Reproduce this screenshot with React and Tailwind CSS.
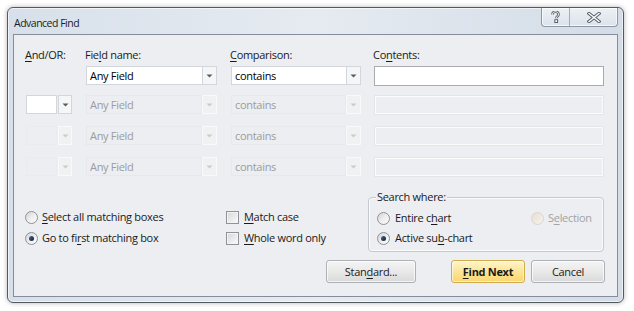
import React from "react";

const FONT = "font-['Open_Sans',sans-serif]";

function Arrow({ disabled }) {
  return (
    <svg width="7" height="4" viewBox="0 0 7 4">
      <path d="M0.5 0.5h6l-3 3z" fill={disabled ? "#c9cbce" : "#5b5b5b"} />
    </svg>
  );
}

function Combo({ text, enabled, w }) {
  if (enabled) {
    return (
      <div className={`flex h-[19px] ${w} border border-[#d3d6da] bg-white`}>
        <div className="flex flex-1 items-center pl-[3px] text-[#000]">{text}</div>
        <div className="flex w-[14px] items-center justify-center border-l border-[#d3d6da] bg-[#f5f6f7]">
          <Arrow />
        </div>
      </div>
    );
  }
  return (
    <div className={`flex h-[19px] ${w}`}>
      <div className="flex flex-1 items-center border border-[#e6e8eb] pl-[3px] text-[#9c9c9c]">{text}</div>
      <div className="flex w-[15px] items-center justify-center border border-[#f8f9fa] bg-[#eff1f3]">
        <Arrow disabled />
      </div>
    </div>
  );
}

function AndOr({ enabled }) {
  return (
    <div className="flex h-[19px] w-[46px] gap-[1px]">
      <div className={`flex-1 border ${enabled ? "border-[#d3d6da] bg-white" : "border-[#e9ebee]"}`} />
      <div
        className={`flex w-[14px] items-center justify-center border ${
          enabled ? "border-[#d3d6da] bg-[#f5f6f7]" : "border-[#f8f9fa] bg-[#eff1f3]"
        }`}
      >
        <Arrow disabled={!enabled} />
      </div>
    </div>
  );
}

function Contents({ enabled }) {
  return enabled ? (
    <div className="h-[20px] w-[230px] border border-[#a9abae] bg-white" />
  ) : (
    <div className="h-[20px] w-[230px] border border-[#e3e5e8] shadow-[inset_0_0_0_1px_#fbfbfc]" />
  );
}

function Radio({ checked, disabled }) {
  return (
    <div
      className={`flex h-[13px] w-[13px] shrink-0 items-center justify-center rounded-full border ${
        disabled
          ? "border-[#dcd6cc] bg-linear-to-br from-[#e6dfd3] to-[#f6f2ec]"
          : "border-[#8f9296] bg-linear-to-br from-[#d6d3cf] via-[#eeeeee] to-[#fbfbfb]"
      }`}
    >
      {checked && <div className="h-[5px] w-[5px] rounded-full bg-linear-to-br from-[#4b6a96] to-[#0f1e38]" />}
    </div>
  );
}

function Check() {
  return (
    <div className="flex h-[13px] w-[13px] shrink-0 items-center justify-center border border-[#8f9296] bg-[#f4f4f4]">
      <div className="h-[9px] w-[9px] bg-linear-to-br from-[#d9dadc] to-[#f8f8f8]" />
    </div>
  );
}

function U({ children }) {
  return <span className="underline decoration-[1px] underline-offset-[2px]">{children}</span>;
}

export default function App() {
  const rowGaps = ["mt-[4px]", "mt-[9px]", "mt-[11px]", "mt-[11px]"];
  return (
    <div className={`flex h-[311px] w-[634px] bg-white pl-[7px] pt-[7px] ${FONT} text-[11px] leading-[14px] tracking-[-0.3px] text-[#1a1a1a]`}>
      <div className="flex h-[296px] w-[617px] flex-col rounded-[6px] border border-[#54595f] bg-linear-to-r from-[#d7e0ea] via-[#e6ebf1] to-[#d3dce7] px-[5px] pb-[5px] shadow-[0_0_5px_rgba(0,0,0,0.3),inset_0_0_0_1px_rgba(255,255,255,0.6)]">
        <div className="flex h-[26px] items-start justify-between">
          <div className="pl-[1px] pt-[8px] text-[10.5px] leading-[14px] tracking-[-0.5px] text-[#1b1b1b]">Advanced Find</div>
          <div className="flex h-[19px] overflow-hidden rounded-b-[4px] border border-t-0 border-[#8d97a3] bg-linear-to-b from-[#edf1f5] to-[#dce3eb] shadow-[inset_0_0_0_1px_rgba(255,255,255,0.7)]">
            <div className="flex w-[28px] items-center justify-center border-r border-[#a3adb9]">
              <svg width="9" height="12" viewBox="0 0 9 12">
                <path
                  d="M1.5 3.5 C1.5 1.2 3 0.8 4.5 0.8 C6.2 0.8 7.5 1.8 7.5 3.4 C7.5 5.2 5.2 5.5 5.2 7.3"
                  fill="none"
                  stroke="#59606a"
                  strokeWidth="2.6"
                />
                <path
                  d="M1.5 3.5 C1.5 1.2 3 0.8 4.5 0.8 C6.2 0.8 7.5 1.8 7.5 3.4 C7.5 5.2 5.2 5.5 5.2 7.3"
                  fill="none"
                  stroke="#ffffff"
                  strokeWidth="1"
                />
                <rect x="3.8" y="8.7" width="2.8" height="2.8" fill="#ffffff" stroke="#59606a" strokeWidth="1" />
              </svg>
            </div>
            <div className="flex w-[47px] items-center justify-center">
              <svg width="14" height="11" viewBox="0 0 14 11">
                <path d="M2 1.5 L12 9.5 M12 1.5 L2 9.5" stroke="#59606a" strokeWidth="3.4" strokeLinecap="square" />
                <path d="M2 1.5 L12 9.5 M12 1.5 L2 9.5" stroke="#ffffff" strokeWidth="1.4" strokeLinecap="square" />
              </svg>
            </div>
          </div>
        </div>

        <div className="flex flex-1 flex-col border border-[#848d99] bg-[#eceef1] pl-[11px] pr-[12px]">
          <div className="mt-[13px] flex">
            <div className="w-[60px]"><U>A</U>nd/OR:</div>
            <div className="w-[145px]">Fie<U>l</U>d name:</div>
            <div className="w-[143px]"><U>C</U>omparison:</div>
            <div>Co<U>n</U>tents:</div>
          </div>

          {[0, 1, 2, 3].map((i) => (
            <div key={i} className={`${rowGaps[i]} flex items-start`}>
              <div className="w-[60px] pl-[1px]">{i === 0 ? null : <AndOr enabled={i === 1} />}</div>
              <div className="w-[145px] pl-[1px]">
                <Combo text="Any Field" enabled={i === 0} w="w-[131px]" />
              </div>
              <div className="w-[143px] pl-[1px]">
                <Combo text="contains" enabled={i === 0} w="w-[130px]" />
              </div>
              <div className="pl-[1px]">
                <Contents enabled={i === 0} />
              </div>
            </div>
          ))}

          <div className="mt-[20px] flex">
            <div className="flex w-[201px] flex-col gap-[5px] pt-[12px]">
              <div className="flex h-[16px] items-center gap-[4px]">
                <Radio />
                <span><U>S</U>elect all matching boxes</span>
              </div>
              <div className="flex h-[16px] items-center gap-[4px]">
                <Radio checked />
                <span>Go to fi<U>r</U>st matching box</span>
              </div>
            </div>
            <div className="flex w-[142px] flex-col gap-[5px] pt-[12px]">
              <div className="flex h-[16px] items-center gap-[5px]">
                <Check />
                <span><U>M</U>atch case</span>
              </div>
              <div className="flex h-[16px] items-center gap-[5px]">
                <Check />
                <span><U>W</U>hole word only</span>
              </div>
            </div>
            <div className="relative h-[55px] w-[236px] rounded-[4px] border border-[#c5c9cf] shadow-[inset_0_0_0_1px_#fafbfc]">
              <div className="absolute left-[7px] top-[-8px] bg-[#eceef1] px-[1px]">Search where:</div>
              <div className="flex flex-col gap-[4px] pl-[8px] pt-[12px]">
                <div className="flex h-[16px] items-center">
                  <div className="flex w-[154px] items-center gap-[5px]">
                    <Radio />
                    <span>Entire c<U>h</U>art</span>
                  </div>
                  <div className="flex items-center gap-[4px] text-[#a3a3a3]">
                    <Radio disabled />
                    <span>S<U>e</U>lection</span>
                  </div>
                </div>
                <div className="flex h-[16px] items-center gap-[5px]">
                  <Radio checked />
                  <span>Active su<U>b</U>-chart</span>
                </div>
              </div>
            </div>
          </div>

          <div className="mt-[8px] flex justify-end">
            <div className="flex h-[23px] w-[90px] items-center justify-center rounded-[3px] border border-[#adb0b4] bg-linear-to-b from-[#f4f4f4] via-[#e9e9e9] to-[#d9d9d9] shadow-[inset_0_0_0_1px_rgba(255,255,255,0.7)]">
              Stan<U>d</U>ard...
            </div>
            <div className="ml-[35px] flex h-[23px] w-[74px] items-center justify-center rounded-[3px] border border-[#d3ab4f] bg-linear-to-b from-[#fff5cd] via-[#fde596] to-[#f9d66f] font-bold text-[#1a1a1a] shadow-[inset_0_0_0_1px_rgba(255,255,255,0.6)]">
              <U>F</U>ind Next
            </div>
            <div className="ml-[6px] flex h-[23px] w-[74px] items-center justify-center rounded-[3px] border border-[#adb0b4] bg-linear-to-b from-[#f4f4f4] via-[#e9e9e9] to-[#d9d9d9] shadow-[inset_0_0_0_1px_rgba(255,255,255,0.7)]">
              Cancel
            </div>
          </div>
        </div>
      </div>
    </div>
  );
}
